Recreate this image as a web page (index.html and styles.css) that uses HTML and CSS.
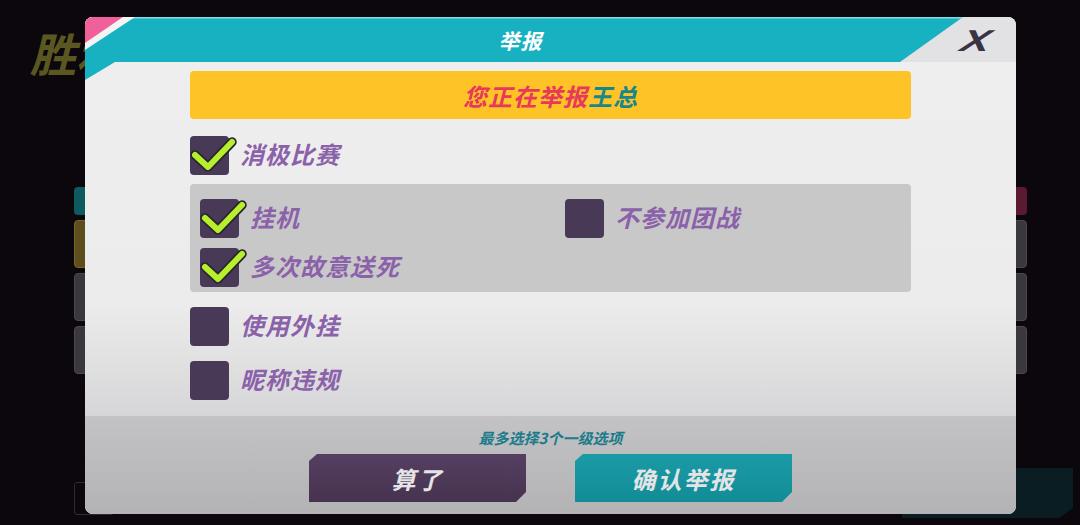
FILE: index.html
```html
<!DOCTYPE html>
<html lang="zh-CN">
<head>
  <meta charset="UTF-8">
  <title>举报</title>
  <link rel="stylesheet" href="styles.css">
</head>
<body>
  <div class="scene">
    <!-- game screen behind the dialog -->
    <div class="backdrop">
      <div class="side side-left">
        <div class="victory">胜利</div>
        <div class="strips">
          <div class="strip tab tab-teal"></div>
          <div class="strip strip-gold"></div>
          <div class="strip"></div>
          <div class="strip"></div>
        </div>
        <div class="foot-box"></div>
      </div>
      <div class="side side-right">
        <div class="strips">
          <div class="strip tab tab-red"></div>
          <div class="strip"></div>
          <div class="strip"></div>
          <div class="strip"></div>
        </div>
        <div class="foot-panel"></div>
      </div>
    </div>

    <!-- report dialog -->
    <div class="modal">
      <div class="modal-head">
        <svg class="head-art" width="931" height="63" viewBox="0 0 931 63">
          <polygon points="0,0 878,0 815,45 30,45 0,63" fill="#18b1c1"/>
          <line x1="0" y1="0.7" x2="877" y2="0.7" stroke="#86dbe4" stroke-width="1.4"/>
          <polygon points="0,0 50,0 0,33" fill="#f4f4f4"/>
          <polygon points="0,0 38,0 0,26" fill="#f0609a"/>
        </svg>
        <div class="modal-title">举报</div>
        <div class="close">X</div>
      </div>

      <div class="modal-body">
        <div class="banner">您正在举报<span class="target">王总</span></div>

        <div class="opt first">
          <div class="box checked">
            <svg width="39" height="39" viewBox="0 0 39 39"><polyline points="5,19 18,31 42,6" fill="none" stroke="#2b2530" stroke-width="9.5" stroke-linecap="round" stroke-linejoin="round"/><polyline points="5,19 18,31 42,6" fill="none" stroke="#b6ef2c" stroke-width="6" stroke-linecap="round" stroke-linejoin="round"/></svg>
          </div>
          <span class="opt-label">消极比赛</span>
        </div>

        <div class="sub-group">
          <div class="opt">
            <div class="box checked">
              <svg width="39" height="39" viewBox="0 0 39 39"><polyline points="5,19 18,31 42,6" fill="none" stroke="#2b2530" stroke-width="9.5" stroke-linecap="round" stroke-linejoin="round"/><polyline points="5,19 18,31 42,6" fill="none" stroke="#b6ef2c" stroke-width="6" stroke-linecap="round" stroke-linejoin="round"/></svg>
            </div>
            <span class="opt-label">挂机</span>
          </div>
          <div class="opt">
            <div class="box"></div>
            <span class="opt-label">不参加团战</span>
          </div>
          <div class="opt">
            <div class="box checked">
              <svg width="39" height="39" viewBox="0 0 39 39"><polyline points="5,19 18,31 42,6" fill="none" stroke="#2b2530" stroke-width="9.5" stroke-linecap="round" stroke-linejoin="round"/><polyline points="5,19 18,31 42,6" fill="none" stroke="#b6ef2c" stroke-width="6" stroke-linecap="round" stroke-linejoin="round"/></svg>
            </div>
            <span class="opt-label">多次故意送死</span>
          </div>
        </div>

        <div class="opt spaced">
          <div class="box"></div>
          <span class="opt-label">使用外挂</span>
        </div>
        <div class="opt spaced">
          <div class="box"></div>
          <span class="opt-label">昵称违规</span>
        </div>
      </div>

      <div class="modal-foot">
        <div class="hint">最多选择3个一级选项</div>
        <div class="actions">
          <button class="btn btn-cancel">算了</button>
          <button class="btn btn-confirm">确认举报</button>
        </div>
      </div>
    </div>
  </div>
</body>
</html>
```

FILE: styles.css
```css
* { box-sizing: border-box; }
body { margin: 0; background: #0b070c; font-family: "Noto Sans CJK SC", "Noto Sans", sans-serif; }

.scene { position: relative; width: 1080px; height: 525px; overflow: hidden; }

/* backdrop */
.backdrop { display: flex; height: 100%; }
.side { display: flex; flex-direction: column; }
.side-left { margin-left: 30px; width: 84px; padding-bottom: 10px; }
.side-right { margin-left: auto; margin-right: 53px; width: 40px; padding-bottom: 7px; }
.victory { margin-top: 24px; height: 56px; line-height: 56px; font-size: 46px; font-weight: 700; font-style: italic; color: #5a5820; white-space: nowrap; }
.side-left .strips { margin-top: 107px; margin-left: 44px; }
.side-right .strips { margin-top: 187px; }
.strip { height: 48px; margin-top: 5px; border-radius: 4px; background: #3a383d; border: 1px solid #4a484d; }
.strip.tab { height: 28px; margin-top: 0; margin-bottom: 3px; border: none; }
.tab-teal { background: #0d5a61; }
.tab-red { background: #5b1a31; }
.strip-gold { background: #5e4e1e; border-color: #7a6422; }
.foot-box { margin-top: auto; margin-left: 44px; width: 40px; height: 33px; border: 1px solid #2e2b31; border-radius: 3px; }
.foot-panel { margin-top: auto; align-self: flex-end; margin-right: -46px; width: 171px; height: 50px; background: #0a1d22; clip-path: polygon(0 0, 100% 0, 100% 80%, 92% 100%, 0 100%); }

/* dialog */
.modal { position: absolute; left: 85px; top: 17px; width: 931px; height: 497px; border-radius: 8px; overflow: hidden; display: flex; flex-direction: column; background: #ededee; }
.modal-head { position: relative; height: 45px; flex: none; background: #e2e1e4; display: flex; align-items: center; justify-content: center; padding-right: 60px; }
.head-art { position: absolute; left: 0; top: 0; z-index: 1; }
.modal-title { position: relative; z-index: 2; font-size: 21px; font-weight: 700; font-style: italic; color: #ffffff; letter-spacing: 1px; }
.close { position: absolute; right: 30px; top: 9px; z-index: 2; font-family: "Liberation Sans", Arial, sans-serif; font-size: 30px; line-height: 30px; font-weight: 700; font-style: italic; color: #3a3343; transform: scaleX(1.45) skewX(-10deg); }

.modal-body { flex: 1; padding: 9px 105px 0; background: linear-gradient(to bottom, #eeeeee 0%, #ececec 68%, #d6d6d8 100%); }
.banner { height: 48px; border-radius: 4px; background: #fec427; display: flex; align-items: center; justify-content: center; font-size: 24px; font-weight: 700; font-style: italic; color: #e8385c; letter-spacing: 1px; }
.banner .target { color: #17878b; }

.opt { display: flex; align-items: center; gap: 11px; height: 39px; }
.opt.first { margin-top: 17px; }
.opt.spaced { margin-top: 15px; }
.box { position: relative; flex: none; width: 39px; height: 39px; border-radius: 4px; background: #483a57; }
.box svg { position: absolute; left: 0; top: 0; overflow: visible; }
.opt-label { font-size: 24px; font-weight: 700; font-style: italic; color: #8b61aa; letter-spacing: 1px; white-space: nowrap; transform: translateY(-2px); }

.sub-group { margin-top: 9px; height: 108px; padding: 15px 10px 5px; border-radius: 4px; background: #c8c8c9; display: grid; grid-template-columns: 365px 1fr; row-gap: 10px; }

.modal-foot { height: 98px; flex: none; background: linear-gradient(to bottom, #c3c2c5, #b3b3b5); padding-top: 12px; display: flex; flex-direction: column; align-items: center; }
.hint { height: 20px; line-height: 20px; font-size: 15px; font-weight: 700; font-style: italic; color: #1b7b8a; }
.actions { margin-top: 6px; display: flex; gap: 49px; }
.btn { width: 217px; height: 48px; border: none; padding: 0; font-family: inherit; font-size: 24px; font-weight: 700; font-style: italic; color: #e4e4e6; letter-spacing: 2px; clip-path: polygon(8px 0, 100% 0, 100% calc(100% - 10px), calc(100% - 10px) 100%, 0 100%, 0 7px); }
.btn-cancel { background: linear-gradient(to bottom, #553f62, #46334f); }
.btn-confirm { background: linear-gradient(to bottom, #1a9ba6, #128c97); }
```
